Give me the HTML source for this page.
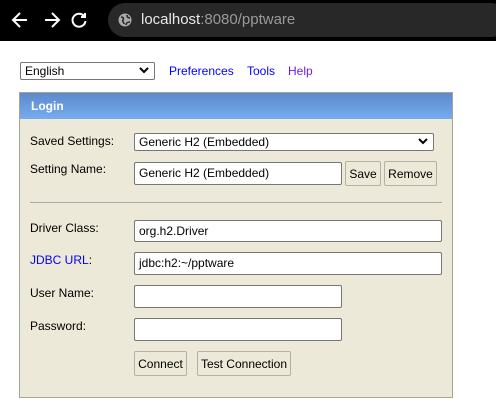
<!DOCTYPE html><html><head><style>
*{box-sizing:border-box;margin:0;padding:0}
body{width:496px;height:412px;background:#fff;font-family:"Liberation Sans",Arial,sans-serif;font-size:12px;position:relative;overflow:hidden;color:#000}
.a{position:absolute}
.bar{left:0;top:0;width:496px;height:41px;background:#000}
.pill{left:108px;top:3px;width:400px;height:34px;background:#282828;border-radius:17px}
.url{left:141px;top:11px;font-size:15px;color:#e8e8e8}
.url span{color:#9a9a9a}
.lnk{top:64px;color:#00f;font-size:12px}
.panel{left:19px;top:92px;width:434px;height:306px;background:#ece9d8;border:1px solid #a8a595}
.hdr{left:0;top:0;width:432px;height:26px;background:linear-gradient(#5d89cb,#75adf0);color:#fff;font-weight:bold;padding:6px 0 0 11px;font-size:12px}
.lbl{left:10px;font-size:12px}
.inp{background:#fff;border:1px solid #767676;border-radius:2px;font-size:12px;padding:3px 0 0 4px}
.btn{background:#ece9d8;border:1px solid #b5b2a5;border-radius:2px;font-size:12px;text-align:center;padding-top:5px}
.sel{background:#fff;border:1px solid #767676;border-radius:2px;font-size:12px;padding:1px 0 0 4px}
.chev{position:absolute;right:5px;top:3px}
</style></head><body>
<div class="a bar"></div>
<div class="a pill"></div>
<svg class="a" style="left:10px;top:10px" width="80" height="20" viewBox="0 0 80 20" fill="none" stroke="#fff" stroke-width="2"><path d="M3 10h14M10 3L3 10l7 7"/><path d="M49 10h-14M42 3l7 7-7 7"/><path d="M74 6a6.5 6.5 0 1 0 1.5 5"/><path d="M75 3v4h-4" fill="#fff"/></svg>
<svg class="a" style="left:118px;top:13px" width="14" height="14" viewBox="0 0 14 14"><circle cx="7" cy="7" r="6.5" fill="#aaa"/><path d="M3 4c2 0 3 1 2 3s1 2 1 4M9 2c0 2 1 3 3 3M8 12c0-2 2-3 4-3" stroke="#282828" stroke-width="1.6" fill="none"/></svg>
<div class="a url">localhost<span>:8080/pptware</span></div>
<div class="a sel" style="left:20px;top:62px;width:135px;height:18px">English<svg class="chev" width="10" height="8" viewBox="0 0 10 8"><path d="M1 2l4 4 4-4" stroke="#000" stroke-width="2" fill="none"/></svg></div>
<div class="a lnk" style="left:169px">Preferences</div>
<div class="a lnk" style="left:247px">Tools</div>
<div class="a lnk" style="left:288px;color:#6a1cf0">Help</div>
<div class="a panel"><div class="a hdr">Login</div></div>
<div class="a lbl" style="left:30px;top:134px">Saved Settings:</div>
<div class="a sel" style="left:134px;top:133px;width:300px;height:18px">Generic H2 (Embedded)<svg class="chev" width="10" height="8" viewBox="0 0 10 8"><path d="M1 2l4 4 4-4" stroke="#000" stroke-width="2" fill="none"/></svg></div>
<div class="a lbl" style="left:30px;top:162px">Setting Name:</div>
<div class="a inp" style="left:134px;top:162px;width:208px;height:23px">Generic H2 (Embedded)</div>
<div class="a btn" style="left:345px;top:161px;width:36px;height:25px">Save</div>
<div class="a btn" style="left:384px;top:161px;width:53px;height:25px">Remove</div>
<div class="a" style="left:30px;top:202px;width:412px;height:1px;background:#aaa"></div>
<div class="a lbl" style="left:30px;top:221px">Driver Class:</div>
<div class="a inp" style="left:134px;top:220px;width:308px;height:22px">org.h2.Driver</div>
<div class="a lbl" style="left:30px;top:253px;color:#00f">JDBC URL<span style="color:#000">:</span></div>
<div class="a inp" style="left:134px;top:252px;width:308px;height:23px">jdbc:h2:~/pptware</div>
<div class="a lbl" style="left:30px;top:286px">User Name:</div>
<div class="a inp" style="left:134px;top:285px;width:208px;height:23px"></div>
<div class="a lbl" style="left:30px;top:319px">Password:</div>
<div class="a inp" style="left:134px;top:318px;width:208px;height:23px"></div>
<div class="a btn" style="left:134px;top:351px;width:53px;height:25px">Connect</div>
<div class="a btn" style="left:197px;top:351px;width:94px;height:25px">Test Connection</div>
</body></html>
